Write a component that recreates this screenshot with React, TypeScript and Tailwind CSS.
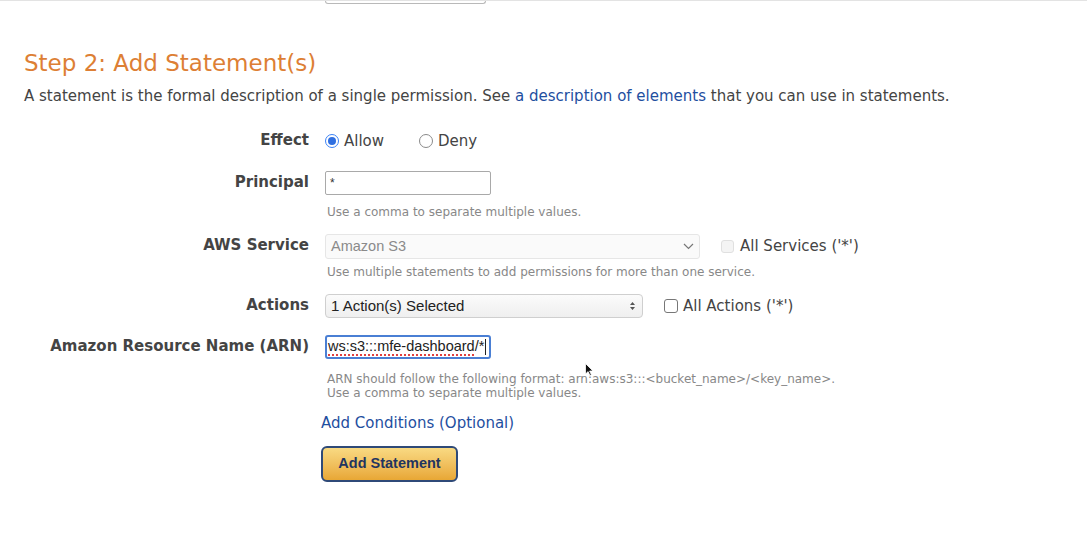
import React from "react";

const sans = { fontFamily: '"DejaVu Sans", Verdana, sans-serif' };
const arial = { fontFamily: '"Liberation Sans", Arial, sans-serif' };

function Label({ children }: { children: React.ReactNode }) {
  return (
    <div className="-mt-[2px] w-[309px] shrink-0 text-right text-[15px] font-bold text-[#444]" style={sans}>
      {children}
    </div>
  );
}

function Help({ children, className = "" }: { children: React.ReactNode; className?: string }) {
  return (
    <div className={`pl-[327px] text-[12px] leading-[14px] text-[#888] ${className}`} style={sans}>
      {children}
    </div>
  );
}

function Radio({ checked }: { checked?: boolean }) {
  return checked ? (
    <span className="flex h-[14px] w-[14px] shrink-0 items-center justify-center rounded-full border border-[#3b82f6] bg-white">
      <span className="h-[8px] w-[8px] rounded-full bg-[#2f6fe0]" />
    </span>
  ) : (
    <span className="block h-[14px] w-[14px] shrink-0 rounded-full border border-[#8a8a8a] bg-white" />
  );
}

export default function App() {
  return (
    <div className="relative h-[542px] w-full overflow-hidden border-t border-[#e3e3e3] bg-white">
      <div className="ml-[325px] h-[3px] w-[161px] rounded-b-sm border-x border-b border-[#b9b9b9]" />

      <h2 className="ml-[24px] mt-[46px] text-[23px] leading-[26px] text-[#dd7f35]" style={sans}>
        Step 2: Add Statement(s)
      </h2>
      <p className="ml-[24px] mt-[11px] text-[15px] leading-[18px] text-[#444]" style={sans}>
        A statement is the formal description of a single permission. See{" "}
        <a className="text-[#1f4f9f]">a description of elements</a> that you can use in statements.
      </p>

      {/* Effect */}
      <div className="mt-[26px] flex h-[20px] items-center">
        <Label>Effect</Label>
        <div className="ml-[16px] flex items-center text-[15px] text-[#444]" style={sans}>
          <Radio checked />
          <span className="ml-[5px]">Allow</span>
          <span className="ml-[35px] flex">
            <Radio />
          </span>
          <span className="ml-[5px]">Deny</span>
        </div>
      </div>

      {/* Principal */}
      <div className="mt-[20px] flex h-[24px] items-center">
        <Label>Principal</Label>
        <div
          className="ml-[16px] flex h-[24px] w-[166px] items-center rounded-[2px] border border-[#a9a9a9] px-[4px] text-[12px] text-[#333]"
          style={arial}
        >
          *
        </div>
      </div>
      <Help className="mt-[10px]">Use a comma to separate multiple values.</Help>

      {/* AWS Service */}
      <div className="mt-[15px] flex h-[25px] items-center">
        <Label>AWS Service</Label>
        <div
          className="ml-[16px] flex h-[25px] w-[375px] items-center justify-between rounded-[3px] border border-[#e6e6e6] bg-[#fafafa] pl-[5px] pr-[5px] text-[14.5px] text-[#8a8a8a]"
          style={arial}
        >
          <span>Amazon S3</span>
          <svg width="11" height="7" viewBox="0 0 11 7" fill="none">
            <path d="M1 1l4.5 4.5L10 1" stroke="#777" strokeWidth="1.2" />
          </svg>
        </div>
        <span className="ml-[21px] h-[13px] w-[13px] rounded-[3px] border border-[#e0e0e0] bg-[#f4f4f4]" />
        <span className="ml-[6px] text-[15px] text-[#444]" style={sans}>
          All Services ('*')
        </span>
      </div>
      <Help className="mt-[6px]">Use multiple statements to add permissions for more than one service.</Help>

      {/* Actions */}
      <div className="mt-[15px] flex h-[24px] items-center">
        <Label>Actions</Label>
        <div
          className="ml-[16px] flex h-[24px] w-[318px] items-center justify-between rounded-[4px] border border-[#cfcfcf] bg-gradient-to-b from-[#fbfbfb] to-[#efefef] pl-[5px] pr-[6px] text-[15px] text-[#222]"
          style={arial}
        >
          <span>1 Action(s) Selected</span>
          <svg width="7" height="10" viewBox="0 0 7 10">
            <path d="M3.5 1L6 4H1z M3.5 9L1 6h5z" fill="#555" />
          </svg>
        </div>
        <span className="ml-[21px] h-[14px] w-[14px] rounded-[3px] border border-[#777] bg-white" />
        <span className="ml-[5px] text-[15px] text-[#444]" style={sans}>
          All Actions ('*')
        </span>
      </div>

      {/* ARN */}
      <div className="mt-[17px] flex h-[24px] items-center">
        <Label>Amazon Resource Name (ARN)</Label>
        <div
          className="ml-[16px] flex h-[24px] w-[166px] items-center overflow-hidden rounded-[3px] border-2 border-[#4a7fd4] pl-[1px] text-[14.5px] text-[#222]"
          style={arial}
        >
          <span className="whitespace-nowrap">
            <span className="underline decoration-[#e04040] decoration-dotted decoration-[1.5px] underline-offset-[3px]">
              ws:s3:::mfe-dashboard
            </span>
            /*
          </span>
          <span className="ml-[1px] h-[16px] w-px shrink-0 bg-[#222]" />
        </div>
      </div>
      <Help className="mt-[13px]">
        <div>ARN should follow the following format: arn:aws:s3:::&lt;bucket_name&gt;/&lt;key_name&gt;.</div>
        <div>Use a comma to separate multiple values.</div>
      </Help>

      <div className="ml-[321px] mt-[13px] text-[15px] leading-[20px] text-[#1f4f9f]" style={sans}>
        Add Conditions (Optional)
      </div>

      <button
        className="ml-[321px] mt-[13px] flex h-[36px] w-[137px] items-center justify-center rounded-[6px] border-2 border-[#2f4a78] bg-gradient-to-b from-[#f9da82] to-[#e8a734] text-[14.5px] font-bold text-[#1f3560]"
        style={arial}
      >
        Add Statement
      </button>

      {/* mouse pointer */}
      <svg className="absolute left-[585px] top-[362px]" width="9" height="13" viewBox="0 0 9 13">
        <path d="M0.5 0.5v10.5l2.6-2.4 1.8 3.9 1.5-0.7-1.8-3.8h3.4z" fill="#111" stroke="#fff" strokeWidth="0.8" />
      </svg>
    </div>
  );
}
